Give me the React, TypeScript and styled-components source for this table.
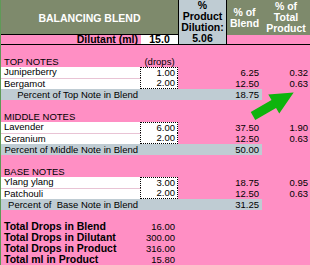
import styled, { createGlobalStyle } from "styled-components";

const PINK = "#ff8fc4";
const OLIVE = "#7e8a6c";
const SLATE = "#bfccd3";

const GlobalStyle = createGlobalStyle`
  html, body {
    margin: 0;
    padding: 0;
    background: ${PINK};
  }
  body {
    font-family: "Liberation Sans", Arial, sans-serif;
    font-size: 9.5px;
    color: #000;
  }
`;

const COLS = "140px 37px 49px 35px 48px";

const Sheet = styled.div`
  position: relative;
  width: 309px;
  height: 265px;
  border-left: 1px solid #5f9a57;
  background: ${PINK};
  overflow: hidden;
`;

const Top = styled.div`
  display: grid;
  grid-template-columns: ${COLS};
  grid-template-rows: 35px 9px;
  border-bottom: 1px solid #000;
`;

const Title = styled.div`
  grid-column: 1 / 3;
  display: flex;
  align-items: center;
  justify-content: center;
  background: ${OLIVE};
  border-bottom: 1px solid #000;
  color: #fff;
  font-weight: bold;
  font-size: 10.5px;
  padding-top: 1px;
`;

const HeadCell = styled.div<{ $tone: "olive" | "slate"; $span?: number }>`
  grid-row: span ${(p) => p.$span ?? 1};
  display: flex;
  flex-direction: column;
  align-items: center;
  justify-content: ${(p) => (p.$span ? "flex-start" : "center")};
  background: ${(p) => (p.$tone === "olive" ? OLIVE : SLATE)};
  color: ${(p) => (p.$tone === "olive" ? "#fff" : "#000")};
  border-left: ${(p) => (p.$span ? "1px solid #000" : "none")};
  border-right: ${(p) => (p.$span ? "1px solid #000" : "none")};
  font-weight: bold;
  font-size: 10.5px;
  line-height: 11px;
  text-align: center;
`;

const HeadValue = styled.div`
  margin-top: auto;
  line-height: 9px;
  padding-bottom: 1px;
`;

const DilLabel = styled.div`
  grid-column: 1;
  text-align: right;
  padding-right: 3px;
  font-weight: bold;
  font-size: 10.5px;
  line-height: 9px;
`;

const DilValue = styled.div`
  grid-column: 2;
  background: #fff;
  text-align: center;
  font-weight: bold;
  font-size: 10.5px;
  line-height: 9px;
`;

const Row = styled.div`
  display: grid;
  grid-template-columns: ${COLS};
  height: 11px;
  line-height: 11px;
  white-space: pre;
`;

const Cell = styled.div<{ $align?: "left" | "right" | "center"; $span?: number; $bold?: boolean }>`
  grid-column: span ${(p) => p.$span ?? 1};
  text-align: ${(p) => p.$align ?? "left"};
  padding: 0 3px;
  font-weight: ${(p) => (p.$bold ? "bold" : "normal")};
  font-size: ${(p) => (p.$bold ? "10.5px" : "9.5px")};
  overflow: visible;
`;

const NameCell = styled.div<{ $first: boolean }>`
  background: #fff;
  padding-left: 3px;
  border-right: 1px dotted #000;
  border-top: ${(p) => (p.$first ? "none" : "1px solid #e9c3d5")};
  line-height: 10px;
`;

const DropCell = styled.div<{ $first: boolean; $last: boolean }>`
  background: #fff;
  text-align: right;
  padding-right: 2px;
  border-right: 1px dotted #000;
  border-top: ${(p) => (p.$first ? "1px dotted #000" : "none")};
  border-bottom: ${(p) => (p.$last ? "1px dotted #000" : "none")};
  line-height: 10px;
`;

const Band = styled.div`
  grid-column: 1 / 5;
  display: grid;
  grid-template-columns: 140px 1fr;
  background: ${SLATE};
`;

const Arrow = styled.svg`
  position: absolute;
  left: 0;
  top: 0;
  pointer-events: none;
`;

type Oil = { name: string; drops: string; blend: string; total: string };
type Section = { title: string; note: string; subtotal: string; oils: Oil[]; drops?: boolean };

const sections: Section[] = [
  {
    title: "TOP NOTES",
    note: "Percent of Top Note in Blend",
    subtotal: "18.75",
    drops: true,
    oils: [
      { name: "Juniperberry", drops: "1.00", blend: "6.25", total: "0.32" },
      { name: "Bergamot", drops: "2.00", blend: "12.50", total: "0.63" },
    ],
  },
  {
    title: "MIDDLE NOTES",
    note: "Percent of Middle Note in Blend",
    subtotal: "50.00",
    oils: [
      { name: "Lavender", drops: "6.00", blend: "37.50", total: "1.90" },
      { name: "Geranium", drops: "2.00", blend: "12.50", total: "0.63" },
    ],
  },
  {
    title: "BASE NOTES",
    note: "Percent of  Base Note in Blend",
    subtotal: "31.25",
    oils: [
      { name: "Ylang ylang", drops: "3.00", blend: "18.75", total: "0.95" },
      { name: "Patchouli", drops: "2.00", blend: "12.50", total: "0.63" },
    ],
  },
];

const totals = [
  ["Total Drops in Blend", "16.00"],
  ["Total Drops in Dilutant", "300.00"],
  ["Total Drops in Product", "316.00"],
  ["Total ml in Product", "15.80"],
];

export default function App() {
  return (
    <>
      <GlobalStyle />
      <Sheet>
        <Top>
          <Title>BALANCING BLEND</Title>
          <HeadCell $tone="slate" $span={2}>
            <span>%</span>
            <span>Product</span>
            <span>Dilution:</span>
            <HeadValue>5.06</HeadValue>
          </HeadCell>
          <HeadCell $tone="olive">
            <span>% of</span>
            <span>Blend</span>
          </HeadCell>
          <HeadCell $tone="olive">
            <span>% of</span>
            <span>Total</span>
            <span>Product</span>
          </HeadCell>
          <DilLabel>Dilutant (ml)</DilLabel>
          <DilValue>15.0</DilValue>
        </Top>

        {sections.map((s) => (
          <div key={s.title}>
            <Row />
            <Row>
              <Cell>{s.title}</Cell>
              <Cell $align="center">{s.drops ? "(drops)" : ""}</Cell>
            </Row>
            {s.oils.map((o, i) => (
              <Row key={o.name}>
                <NameCell $first={i === 0}>{o.name}</NameCell>
                <DropCell $first={i === 0} $last={i === s.oils.length - 1}>
                  {o.drops}
                </DropCell>
                <Cell $span={2} $align="right">
                  {o.blend}
                </Cell>
                <Cell $align="right" style={{ paddingRight: 2 }}>
                  {o.total}
                </Cell>
              </Row>
            ))}
            <Row>
              <Band>
                <Cell $align="right">{s.note}</Cell>
                <Cell $align="right">{s.subtotal}</Cell>
              </Band>
            </Row>
          </div>
        ))}

        <Row />
        {totals.map(([label, value]) => (
          <Row key={label}>
            <Cell $bold>{label}</Cell>
            <Cell $align="right">{value}</Cell>
          </Row>
        ))}

        <Arrow width="310" height="265" viewBox="0 0 310 265">
          <polygon
            transform="translate(252 116) rotate(-30)"
            points="0,-4.5 24,-4.5 24,-11 47,0 24,11 24,4.5 0,4.5"
            fill="#0db40d"
          />
        </Arrow>
      </Sheet>
    </>
  );
}
